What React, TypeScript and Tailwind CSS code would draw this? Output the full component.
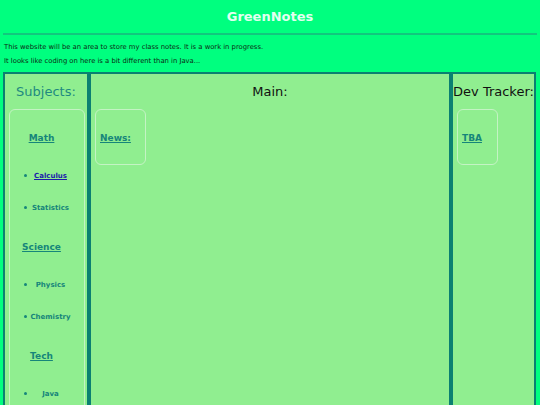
const font = { fontFamily: '"DejaVu Sans", Verdana, sans-serif' }

function Heading({ label, mt }: { label: string; mt: string }) {
    return (
        <div className={`${mt} h-[16px] flex items-center justify-center pr-[11px]`}>
            <a href="#" className="text-[9px] font-bold text-[#16857a] underline">{label}</a>
        </div>
    )
}

function Item({ label, mt, link }: { label: string; mt: string; link?: boolean }) {
    return (
        <div className={`${mt} h-[16px] flex items-center pl-[14px] pr-[13px]`}>
            <span className="mt-[5px] w-[3px] h-[3px] rounded-full bg-[#16857a]" />
            <span className="flex-1 text-center pl-[3px]">
                {link ? (
                    <a href="#" className="text-[7px] font-bold text-[#1c1caa] underline">{label}</a>
                ) : (
                    <span className="text-[7px] font-bold text-[#16857a]">{label}</span>
                )}
            </span>
        </div>
    )
}

export default function App() {
    return (
        <div className="w-[540px] h-[405px] overflow-hidden bg-[#00ff7f]" style={font}>
            <header className="h-[33px] pt-[1px] flex items-center justify-center">
                <h1 className="text-[13px] font-bold text-[#e2fff0]">GreenNotes</h1>
            </header>
            <div className="mx-[3px] border-t-2 border-[#12c77e]" />
            <p className="mt-[5px] pl-[4px] text-[6.8px] leading-[14px] text-[#0c2a14]">
                This website will be an area to store my class notes. It is a work in progress.
            </p>
            <p className="pl-[4px] text-[6.8px] leading-[14px] text-[#0c2a14]">
                It looks like coding on here is a bit different than in Java...
            </p>
            <div className="mt-[4px] ml-[3px] flex h-[400px]">
                {/* subjects */}
                <div className="w-[86px] bg-[#90ee90] border-2 border-[#0b8071] flex flex-col">
                    <div className="h-[35px] flex items-center justify-center text-[13px] text-[#1f8a80]">Subjects:</div>
                    <div className="ml-[4px] mr-[2px] flex-1 border border-[#c4f3c4] rounded-[6px]">
                        <Heading label="Math" mt="mt-[21px]" />
                        <Item label="Calculus" mt="mt-[18px]" link />
                        <Item label="Statistics" mt="mt-[16px]" />
                        <Heading label="Science" mt="mt-[27px]" />
                        <Item label="Physics" mt="mt-[18px]" />
                        <Item label="Chemistry" mt="mt-[16px]" />
                        <Heading label="Tech" mt="mt-[27px]" />
                        <Item label="Java" mt="mt-[18px]" />
                    </div>
                </div>
                {/* main */}
                <div className="w-[362px] bg-[#90ee90] border-2 border-[#0b8071]">
                    <div className="h-[35px] flex items-center justify-center text-[13px] text-[#111]">Main:</div>
                    <div className="ml-[4px] w-[51px] h-[56px] pt-[4px] border border-[#c4f3c4] rounded-[6px] flex items-center pl-[4px]">
                        <a href="#" className="text-[9px] font-bold text-[#16857a] underline">News:</a>
                    </div>
                </div>
                {/* dev tracker */}
                <div className="w-[85px] bg-[#90ee90] border-2 border-[#0b8071]">
                    <div className="h-[35px] flex items-center justify-center text-[13px] text-[#111] whitespace-nowrap">Dev Tracker:</div>
                    <div className="ml-[4px] w-[41px] h-[56px] pt-[4px] border border-[#c4f3c4] rounded-[6px] flex items-center pl-[4px]">
                        <a href="#" className="text-[9px] font-bold text-[#16857a] underline">TBA</a>
                    </div>
                </div>
            </div>
        </div>
    )
}
